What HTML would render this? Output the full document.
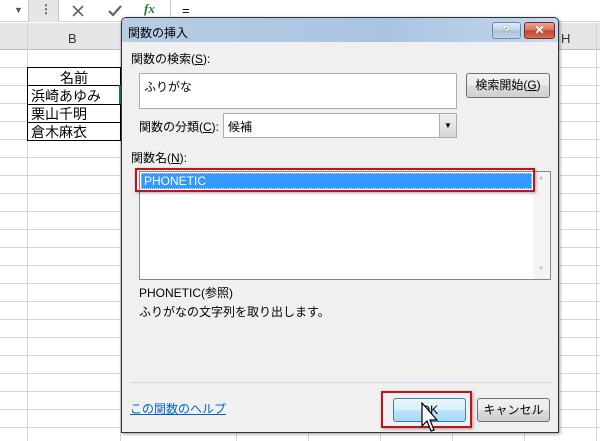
<!DOCTYPE html>
<html><head><meta charset="utf-8"><style>
*{margin:0;padding:0;box-sizing:border-box}
body{width:600px;height:441px;overflow:hidden;background:#fff;position:relative;font-family:"Liberation Sans","Noto Sans CJK JP",sans-serif;font-size:12px;color:#000}
.a{position:absolute}
.hl{position:absolute;height:1px;background:#d4d4d4}
.vl{position:absolute;width:1px;background:#d4d4d4}
u{text-decoration:underline}
.btn{position:absolute;border:1px solid #707070;border-radius:3px;background:linear-gradient(#f2f2f2,#ebebeb 50%,#dddddd 51%,#cfcfcf);text-align:center;font-size:12px}
</style></head><body>
<div class="a" style="left:0;top:0;width:600px;height:22px;background:#fff;border-bottom:1px solid #d4d4d4"></div>
<div class="a" style="left:14px;top:5px;font-size:9px;color:#555">▼</div>
<div class="a" style="left:28px;top:0;width:31px;height:22px;background:#e6e6e6;border-left:1px solid #c6c6c6;border-right:1px solid #c6c6c6"></div>
<div class="a" style="left:40px;top:2px;color:#555;font-weight:bold">⋮</div>
<svg class="a" style="left:72px;top:5px" width="12" height="12"><path d="M1 1L11 11M11 1L1 11" stroke="#666" stroke-width="1.6"/></svg>
<svg class="a" style="left:108px;top:4px" width="14" height="13"><path d="M1 7L5 11L13 2" fill="none" stroke="#666" stroke-width="2.2"/></svg>
<div class="a" style="left:144px;top:1px;font-size:13px;color:#2a7a3a;font-style:italic;font-weight:bold;font-family:'Liberation Serif',serif">fx</div>
<div class="a" style="left:170px;top:0;width:1px;height:22px;background:#c6c6c6"></div>
<div class="a" style="left:182px;top:3px;font-size:13px">=</div>
<div class="a" style="left:0;top:23px;width:600px;height:27px;background:#e6e6e6;border-bottom:1px solid #bdbdbd"></div>
<div class="a" style="left:68px;top:31px;font-size:13px;color:#333">B</div>
<div class="a" style="left:561px;top:31px;font-size:13px;color:#333">H</div>
<div class="vl" style="left:27px;top:23px;height:418px"></div>
<div class="vl" style="left:596px;top:23px;height:418px"></div>
<div class="hl" style="left:0;top:67px;width:600px"></div>
<div class="hl" style="left:0;top:85px;width:600px"></div>
<div class="hl" style="left:0;top:103px;width:600px"></div>
<div class="hl" style="left:0;top:121px;width:600px"></div>
<div class="hl" style="left:0;top:139px;width:600px"></div>
<div class="hl" style="left:0;top:157px;width:600px"></div>
<div class="hl" style="left:0;top:175px;width:600px"></div>
<div class="hl" style="left:0;top:193px;width:600px"></div>
<div class="hl" style="left:0;top:211px;width:600px"></div>
<div class="hl" style="left:0;top:229px;width:600px"></div>
<div class="hl" style="left:0;top:247px;width:600px"></div>
<div class="hl" style="left:0;top:265px;width:600px"></div>
<div class="hl" style="left:0;top:283px;width:600px"></div>
<div class="hl" style="left:0;top:301px;width:600px"></div>
<div class="hl" style="left:0;top:319px;width:600px"></div>
<div class="hl" style="left:0;top:337px;width:600px"></div>
<div class="hl" style="left:0;top:355px;width:600px"></div>
<div class="hl" style="left:0;top:373px;width:600px"></div>
<div class="hl" style="left:0;top:391px;width:600px"></div>
<div class="hl" style="left:0;top:409px;width:600px"></div>
<div class="hl" style="left:0;top:427px;width:600px"></div>
<div class="vl" style="left:120px;top:23px;height:418px"></div>
<div class="vl" style="left:236px;top:433px;height:8px"></div>
<div class="vl" style="left:308px;top:433px;height:8px"></div>
<div class="vl" style="left:380px;top:433px;height:8px"></div>
<div class="vl" style="left:452px;top:433px;height:8px"></div>
<div class="vl" style="left:524px;top:433px;height:8px"></div>
<div class="a" style="left:27px;top:67px;width:94px;height:74px;border:1px solid #000;background:#fff"></div>
<div class="a" style="left:27px;top:85px;width:94px;height:1px;background:#000"></div>
<div class="a" style="left:27px;top:104px;width:94px;height:1px;background:#000"></div>
<div class="a" style="left:27px;top:122px;width:94px;height:1px;background:#000"></div>
<div class="a" style="left:60px;top:68px;font-size:14px">名前</div>
<div class="a" style="left:31px;top:86px;font-size:14px">浜崎あゆみ</div>
<div class="a" style="left:31px;top:104px;font-size:14px">栗山千明</div>
<div class="a" style="left:31px;top:122px;font-size:14px">倉木麻衣</div>
<div class="a" style="left:119px;top:85px;width:3px;height:19px;background:#217346"></div>
<div class="a" style="left:121px;top:17px;width:438px;height:416px;background:#f0f0f0;border:1px solid #333;border-radius:5px 5px 0 0;box-shadow:1px 1px 3px rgba(0,0,0,.4)"></div>
<div class="a" style="left:122px;top:18px;width:436px;height:24px;background:linear-gradient(90deg,#b7cde4,#a9c4e1 60%,#c4d8ec);border-radius:4px 4px 0 0"></div>
<div class="a" style="left:128px;top:24px;font-size:12px">関数の挿入</div>
<div class="a" style="left:492px;top:22px;width:29px;height:17px;border:1px solid #6f8aa8;border-radius:3px;background:linear-gradient(#e3edf7,#bed1e6 50%,#a7bfda 51%,#c4d6ea);text-align:center;font-size:12px;font-weight:bold;color:#fff;line-height:15px;text-shadow:0 0 1px #333">?</div>
<div class="a" style="left:524px;top:22px;width:31px;height:17px;border:1px solid #7d2a22;border-radius:3px;background:linear-gradient(#e8a597,#d5705d 50%,#c23f28 51%,#d66f55);text-align:center;font-size:12px;font-weight:bold;color:#fff;line-height:15px">✕</div>
<div class="a" style="left:131px;top:50px">関数の検索(<u>S</u>):</div>
<div class="a" style="left:139px;top:73px;width:318px;height:36px;background:#fff;border:1px solid #abadb3"></div>
<div class="a" style="left:144px;top:78px">ふりがな</div>
<div class="btn" style="left:466px;top:73px;width:84px;height:25px;line-height:23px">検索開始(<u>G</u>)</div>
<div class="a" style="left:139px;top:118px">関数の分類(<u>C</u>):</div>
<div class="a" style="left:223px;top:113px;width:234px;height:25px;background:#fff;border:1px solid #abadb3"></div>
<div class="a" style="left:228px;top:118px">候補</div>
<div class="a" style="left:439px;top:114px;width:17px;height:23px;background:linear-gradient(#f2f2f2,#d6d6d6);border-left:1px solid #abadb3;text-align:center;font-size:8px;line-height:23px">▼</div>
<div class="a" style="left:131px;top:149px">関数名(<u>N</u>):</div>
<div class="a" style="left:139px;top:171px;width:412px;height:109px;background:#fff;border:1px solid #828790"></div>
<div class="a" style="left:533px;top:172px;width:17px;height:107px;background:#f4f4f4"></div>
<div class="a" style="left:538px;top:175px;font-size:6px;color:#bbb">▲</div>
<div class="a" style="left:538px;top:266px;font-size:6px;color:#bbb">▼</div>
<div class="a" style="left:141px;top:173px;width:391px;height:16px;background:#3399ff;border:1px dotted #cfe4ff"></div>
<div class="a" style="left:144px;top:174px;color:#fff">PHONETIC</div>
<div class="a" style="left:135px;top:168px;width:400px;height:24px;border:2px solid #c0141c;box-shadow:1px 1px 3px rgba(0,0,0,.35)"></div>
<div class="a" style="left:139px;top:284px">PHONETIC(参照)</div>
<div class="a" style="left:139px;top:303px">ふりがなの文字列を取り出します。</div>
<div class="a" style="left:130px;top:382px;width:421px;height:1px;background:#d0dae4"></div>
<div class="a" style="left:130px;top:400px;color:#0066cc;text-decoration:underline">この関数のヘルプ</div>
<div class="a" style="left:393px;top:398px;width:73px;height:24px;border:1px solid #3c7fb1;border-radius:3px;background:linear-gradient(#eaf6fd,#d9f0fc 50%,#bee6fd 51%,#a7d9f5);text-align:center;line-height:22px">OK</div>
<div class="btn" style="left:477px;top:398px;width:73px;height:24px;line-height:22px">キャンセル</div>
<div class="a" style="left:381px;top:391px;width:91px;height:37px;border:2px solid #c0141c;box-shadow:1px 1px 3px rgba(0,0,0,.35)"></div>
<svg class="a" style="left:420px;top:402px" width="22" height="36" viewBox="0 0 22 36"><path d="M2 1 L2 24 L7 19 L11 29 L14 28 L10 18 L17 18 Z" fill="#fff" stroke="#000" stroke-width="1.2"/></svg>
</body></html>
